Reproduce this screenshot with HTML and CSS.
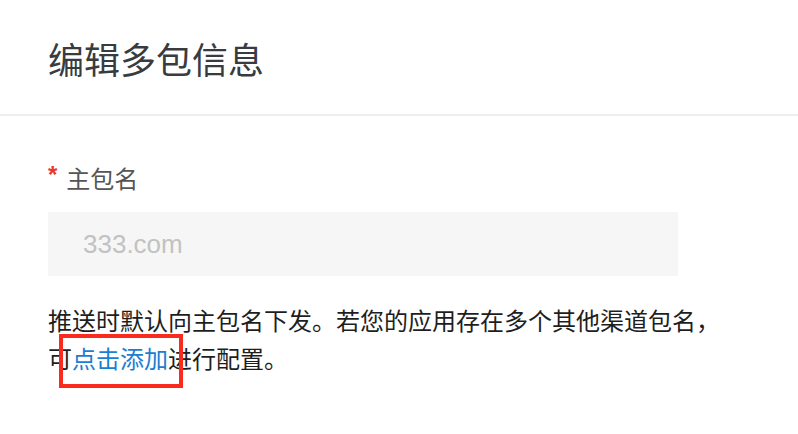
FILE: index.html
```html
<!DOCTYPE html>
<html lang="zh-CN">
<head>
<meta charset="utf-8">
<title>编辑多包信息</title>
<link rel="stylesheet" href="styles.css">
</head>
<body>
<div class="dialog">
  <header class="dialog-header">
    <h1 class="dialog-title">编辑多包信息</h1>
  </header>
  <section class="dialog-body">
    <label class="field-label" for="pkg"><span class="required">*</span>主包名</label>
    <input class="field-input" id="pkg" type="text" placeholder="333.com" readonly>
    <p class="hint">推送时默认向主包名下发。若您的应用存在多个其他渠道包名，<br>可<a class="link" href="#">点击添加</a>进行配置。<span class="highlight"></span></p>
  </section>
</div>
</body>
</html>
```

FILE: styles.css
```css
html, body {
  margin: 0;
  padding: 0;
  background: #ffffff;
}

body {
  font-family: "Noto Sans CJK SC", "Liberation Sans", sans-serif;
  width: 798px;
  height: 434px;
  overflow: hidden;
}

.dialog-header {
  height: 114px;
  border-bottom: 2px solid #eeeeee;
  display: flex;
  align-items: center;
  padding-left: 48px;
}

.dialog-title {
  margin: 0;
  font-size: 36px;
  font-weight: 400;
  line-height: 40px;
  color: #383c41;
  padding-top: 2px;
}

.dialog-body {
  padding: 45px 0 0 48px;
}

.field-label {
  display: flex;
  align-items: center;
  height: 32px;
  font-size: 24px;
  color: #555555;
}

.required {
  font-family: "Liberation Sans", sans-serif;
  font-weight: 700;
  color: #e8372b;
  font-size: 24px;
  line-height: 1;
  margin-right: 9px;
  position: relative;
  top: -2px;
}

.field-input {
  display: block;
  box-sizing: border-box;
  margin-top: 19px;
  width: 630px;
  height: 64px;
  border: none;
  outline: none;
  background: #f6f6f6;
  padding: 0 0 0 35px;
  font-family: "Liberation Sans", sans-serif;
  font-size: 26px;
  color: #333333;
}

.field-input::placeholder {
  color: #c2c2c2;
}

.hint {
  position: relative;
  margin: 25px 0 0;
  font-size: 24px;
  line-height: 38px;
  color: #1e1e1e;
}

.link {
  color: #1b7dd3;
  text-decoration: none;
}

.highlight {
  position: absolute;
  left: 11px;
  top: 33px;
  width: 124px;
  height: 54px;
  box-sizing: border-box;
  border: 4px solid #fb2a1f;
  pointer-events: none;
}
```
